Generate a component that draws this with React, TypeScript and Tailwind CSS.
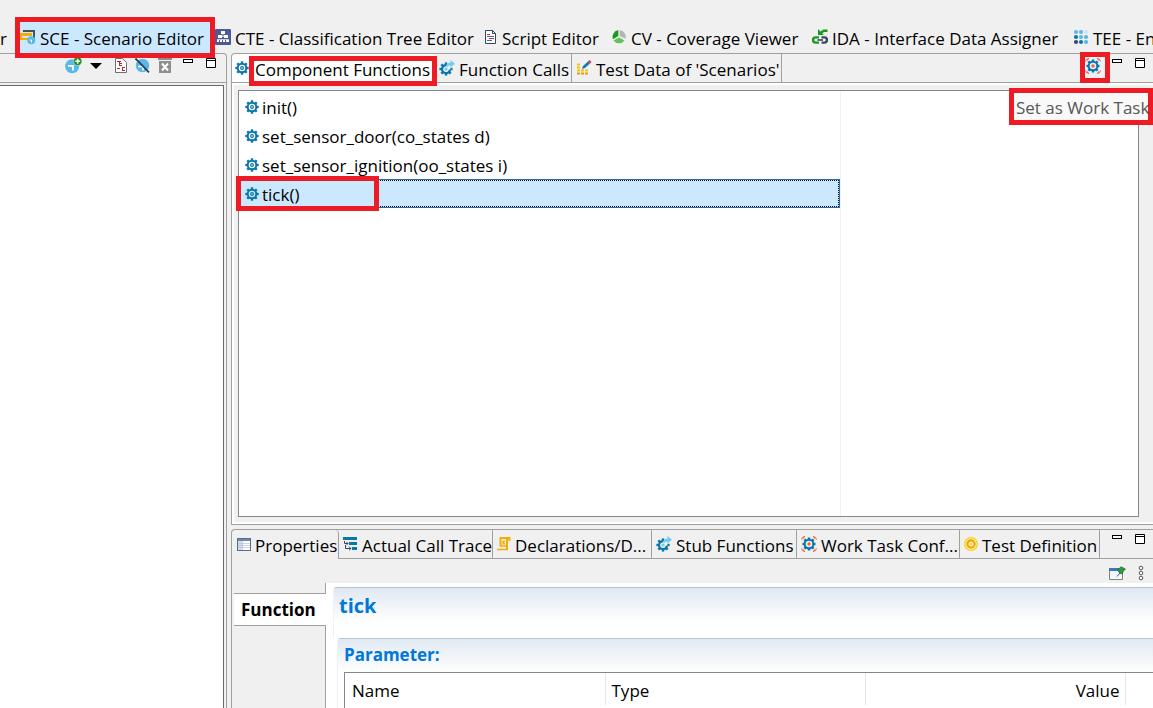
import type { ReactNode } from "react";

interface IconProps {
	className?: string;
}

interface TabItem {
	label: string;
	icon: ReactNode;
	width: string;
	marked?: boolean;
}

const TEETH = [0, 45, 90, 135, 180, 225, 270, 315];

function GearIcon({ className = "size-[14px]" }: IconProps) {
	return (
		<svg viewBox="0 0 14 14" className={`${className} shrink-0`} fill="none" stroke="#0b76a8">
			<circle cx="7" cy="7" r="4.3" strokeWidth="2" />
			{TEETH.map((a) => (
				<path key={a} d="M7 0.3V2.6" strokeWidth="2.4" transform={`rotate(${a} 7 7)`} />
			))}
			<circle cx="7" cy="7" r="1.4" strokeWidth="1.2" />
		</svg>
	);
}

function GearArrowIcon() {
	return (
		<svg viewBox="0 0 16 16" className="size-4 shrink-0" fill="none" stroke="#0b76a8">
			<path d="M7.5 5.2A4 4 0 1 0 11 9.6" strokeWidth="2.2" />
			{[0, 90, 135, 180, 225, 270, 315].map((a) => (
				<path key={a} d="M7 2.4V4.6" strokeWidth="2.4" transform={`rotate(${a} 7 9)`} />
			))}
			<path d="M8 9C8 6.5 9 5.4 11.3 5.4V7.6L16 3.8L11.5 0V2.6C8.5 2.8 7 5 8 9Z" fill="#6fcdf5" stroke="none" />
			<circle cx="7" cy="9" r="1.6" fill="#6fcdf5" stroke="none" />
		</svg>
	);
}

function WorkTaskIcon() {
	return (
		<svg viewBox="0 0 16 16" className="size-4 shrink-0" fill="none" stroke="#0b76a8">
			<circle cx="8" cy="8" r="4.3" strokeWidth="2" />
			{TEETH.map((a) => (
				<path key={a} d="M8 1.5V3.5" strokeWidth="2.5" transform={`rotate(${a} 8 8)`} />
			))}
			<circle cx="8" cy="8" r="1.7" fill="#f4623a" stroke="none" />
			<path
				d="M0.5 3.5V2.5M2.5 0.8H4M15.5 3.5V2.5M12 0.8H13.5M0.5 12.5V13.5M2.5 15.2H4M15.5 12.5V13.5M12 15.2H13.5M1.3 1.3L2.6 2.6M14.7 1.3L13.4 2.6M1.3 14.7L2.6 13.4M14.7 14.7L13.4 13.4"
				stroke="#f4623a"
				strokeWidth="1.4"
			/>
		</svg>
	);
}

function ScenarioIcon() {
	return (
		<svg viewBox="0 0 16 16" className="size-4 shrink-0">
			<path d="M3 1H15V9H13V3H3Z" fill="#4a4f5c" />
			<path d="M0 4H12V7H2V9H8V11H0Z" fill="#f2ae00" />
			<circle cx="11.3" cy="11.2" r="4" fill="#58b8e6" />
			<path d="M9.5 11H11.5V13.5" fill="none" stroke="#fff" strokeWidth="1" />
		</svg>
	);
}

function TreeIcon() {
	return (
		<svg viewBox="0 0 16 16" className="size-4 shrink-0">
			<rect width="16" height="16" rx="1" fill="#4d5a94" />
			<path d="M6 2H10V5H6ZM3 6H7V9H3ZM9 6H13V9H9ZM2 11H4V13H2ZM5 11H7V13H5ZM8 11H10V13H8ZM11 11H14V13H11Z" fill="#fff" />
			<path d="M8 4V7.5M5 7.5H11M2 10.5H14" stroke="#fff" strokeWidth="0.7" />
		</svg>
	);
}

function ScriptIcon() {
	return (
		<svg viewBox="0 0 14 16" className="h-4 w-[14px] shrink-0" fill="none">
			<path d="M1.5 1.5H8.5L11.5 4.5V14.5H1.5Z" fill="#fff" stroke="#33475f" />
			<path d="M8.5 1.5V4.5H11.5" stroke="#33475f" />
			<path d="M3 5.5H6M5 9.5H10" stroke="#d22" />
			<path d="M3 7.5H10M3 11.5H8" stroke="#2f6f9f" />
		</svg>
	);
}

function CoverageIcon() {
	return (
		<svg viewBox="0 0 16 16" className="size-4 shrink-0">
			<path d="M7.3 1V7L2 10.2A7 7 0 0 1 7.3 1Z" fill="#149a1d" />
			<path d="M8.7 1A7 7 0 0 1 14.5 9.8L8.7 7Z" fill="#b5b5b5" />
			<path d="M8 8.4L13.6 11.4A7 7 0 0 1 2.4 11.4Z" fill="#62c25a" />
		</svg>
	);
}

function InterfaceIcon() {
	return (
		<svg viewBox="0 0 16 16" className="size-4 shrink-0" fill="none">
			<path d="M6 0V6H12L10.2 4.4L12 3H15.5V0.5H11.5L8.5 2.4Z" fill="#149a1d" />
			<path d="M7 8.4H3.6A2.6 2.6 0 0 0 3.6 13.6H7" stroke="#149a1d" strokeWidth="2.4" />
			<path d="M9.5 8.4H12.4A2.6 2.6 0 0 1 12.4 13.6H9.5" stroke="#3a4663" strokeWidth="2.4" />
			<path d="M5.5 11H11" stroke="#3a4663" strokeWidth="1.6" />
		</svg>
	);
}

function EnvironmentIcon() {
	const colors = ["#58b8e6", "#58b8e6", "#cfe3f1", "#0b76a8", "#58b8e6", "#58b8e6", "#3a4663", "#0b76a8", "#58b8e6"];
	return (
		<svg viewBox="0 0 16 16" className="size-4 shrink-0">
			{colors.map((c, i) => (
				<circle key={i} cx={3 + (i % 3) * 5} cy={3 + Math.floor(i / 3) * 5} r="2.1" fill={c} />
			))}
		</svg>
	);
}

function TestDataIcon() {
	return (
		<svg viewBox="0 0 15 16" className="h-4 w-[15px] shrink-0" fill="none">
			<path d="M0 4.5H4M0 7.5H4" stroke="#f5c400" strokeWidth="2" strokeDasharray="3 1" />
			<path d="M0 10.5H12" stroke="#f5c400" strokeWidth="2" strokeDasharray="3 1" />
			<path d="M0 13.5H12" stroke="#e09a1a" strokeWidth="2" strokeDasharray="3 1" />
			<path d="M5 9L6 6L11 1.5L13 3.5L8 8Z" fill="#1878b0" />
			<path d="M11 1.5L12.5 0L14.5 2L13 3.5Z" fill="#d9343a" />
		</svg>
	);
}

function PropertiesIcon() {
	return (
		<svg viewBox="0 0 14 14" className="size-[14px] shrink-0">
			<rect x="0.5" y="0.5" width="13" height="12" fill="#fff" stroke="#5d6c86" />
			<path d="M1 1H13V3H1Z" fill="#7287a8" />
			<path d="M1 3H5V12H1Z" fill="#d5dde9" />
			<path d="M5.5 3V12M1 5.5H13M1 7.5H13M1 9.5H13" stroke="#b8c2d2" strokeWidth="0.7" />
		</svg>
	);
}

function TraceIcon() {
	return (
		<svg viewBox="0 0 15 14" className="h-[14px] w-[15px] shrink-0" fill="none">
			<path d="M0 0H14V3H0ZM6 5H14V8H6ZM9 10H14V13H9Z" fill="#0b76a8" />
			<path d="M1.5 4V6.5H5M3.5 5L5 6.5L3.5 8M2.5 8V11.5H8M6 9.5L8 11.5L6 13.3" stroke="#3a4a5c" />
		</svg>
	);
}

function ScrollIcon() {
	return (
		<svg viewBox="0 0 14 14" className="size-[14px] shrink-0" fill="none" stroke="#f2ae00">
			<path d="M3.5 1H12.5V4M3.5 0V9.5M10 1V12" strokeWidth="2" />
			<path d="M0 12.5H11M3.5 9H10M8 4.2H6.2V6.6H8" strokeWidth="1.6" />
		</svg>
	);
}

function TargetIcon() {
	return (
		<svg viewBox="0 0 14 14" className="size-[14px] shrink-0" fill="none">
			<circle cx="7" cy="7" r="6.3" fill="#fff4b0" stroke="#f5cf20" strokeWidth="1.3" />
			<circle cx="7" cy="7" r="3.6" stroke="#f0a30a" strokeWidth="2.2" />
			<circle cx="7" cy="7" r="1" fill="#f5cf20" />
		</svg>
	);
}

function MinimizeIcon() {
	return (
		<svg viewBox="0 0 11 12" className="h-3 w-[11px]" fill="none">
			<rect x="0.5" y="2.5" width="9" height="3" fill="#fff" stroke="#000" />
		</svg>
	);
}

function MaximizeIcon() {
	return (
		<svg viewBox="0 0 11 12" className="h-3 w-[11px]" fill="none">
			<path d="M0.5 1.5H9.5V10.5H0.5ZM0.5 3.5H9.5" fill="#fff" stroke="#000" />
		</svg>
	);
}

function AddIcon() {
	return (
		<svg viewBox="0 0 17 17" className="size-[17px]">
			<circle cx="7.2" cy="9.2" r="7" fill="#58b8e6" />
			<path d="M3 8.8H8V13.5" fill="none" stroke="#fff" strokeWidth="1.8" />
			<circle cx="12.7" cy="4.3" r="4.2" fill="#128a1c" stroke="#dff0d8" strokeWidth="0.6" />
			<path d="M12.7 1.8V6.8M10.2 4.3H15.2" stroke="#fff" strokeWidth="1.6" />
		</svg>
	);
}

function ReportIcon() {
	return (
		<svg viewBox="0 0 12 15" className="h-[15px] w-3" fill="none">
			<path d="M0.5 0.5H7.5L11.5 4.5V14.5H0.5Z" fill="#fff" stroke="#6b6f78" />
			<path d="M2 3.5H6M4 5.5H7M4 7.5H7M2 10.5H5M7 9.5H10M7 12.5H10M4.5 3V8M7.5 9V13" stroke="#c9202c" />
		</svg>
	);
}

function DisableIcon() {
	return (
		<svg viewBox="0 0 15 15" className="size-[15px]" fill="none">
			<circle cx="7.5" cy="7.5" r="6.8" fill="#58b8e6" />
			<path d="M3 8.5H8V12.5" stroke="#fff" strokeWidth="1.6" />
			<path d="M0.5 0.5L14 14.3" stroke="#2e3c5c" strokeWidth="1.8" />
		</svg>
	);
}

function DeleteIcon() {
	return (
		<svg viewBox="0 0 14 15" className="h-[15px] w-[14px]" fill="none">
			<path d="M0 0H14V2H0ZM1 3H13V15H1Z" fill="#8f8f8f" />
			<path d="M4 5.5L10 12.5M10 5.5L4 12.5" stroke="#fff" strokeWidth="2" />
		</svg>
	);
}

function PinIcon() {
	return (
		<svg viewBox="0 0 17 15" className="h-[15px] w-[17px]" fill="none">
			<path d="M0.5 2.5H13.5V13.5H0.5Z" fill="#f0f8ff" stroke="#8b8465" />
			<path d="M0 2H10V5H0Z" fill="#3f78b8" />
			<path d="M8 10.5L11 7" stroke="#555" />
			<path d="M8.5 4L12 0.8L16.5 3L14.5 5L13 8L10.5 7Z" fill="#2f9a3b" stroke="#1c6f2c" strokeWidth="0.7" />
		</svg>
	);
}

function MenuDotsIcon() {
	return (
		<svg viewBox="0 0 6 16" className="h-4 w-[6px]" fill="#fff" stroke="#555">
			<circle cx="3" cy="3" r="1.8" />
			<circle cx="3" cy="8" r="1.8" />
			<circle cx="3" cy="13" r="1.8" />
		</svg>
	);
}

/** Red callout around the nearest positioned parent. */
function Highlight({ className }: { className: string }) {
	return <span className={`pointer-events-none absolute z-10 border-5 border-[#ed1c24] ${className}`} />;
}

function ToolButton({ label, children }: { label: string; children: ReactNode }) {
	return (
		<button type="button" aria-label={label} className="flex shrink-0 items-center">
			{children}
		</button>
	);
}

function WindowButtons() {
	return (
		<div className="flex items-start gap-3 pt-[3px]">
			<ToolButton label="Minimize">
				<MinimizeIcon />
			</ToolButton>
			<ToolButton label="Maximize">
				<MaximizeIcon />
			</ToolButton>
		</div>
	);
}

const perspectives: TabItem[] = [
	{ label: "SCE - Scenario Editor", icon: <ScenarioIcon />, width: "w-[195px]", marked: true },
	{ label: "CTE - Classification Tree Editor", icon: <TreeIcon />, width: "w-[269px]" },
	{ label: "Script Editor", icon: <ScriptIcon />, width: "w-[127px]" },
	{ label: "CV - Coverage Viewer", icon: <CoverageIcon />, width: "w-[201px]" },
	{ label: "IDA - Interface Data Assigner", icon: <InterfaceIcon />, width: "w-[261px]" },
	{ label: "TEE - Environment Editor", icon: <EnvironmentIcon />, width: "w-[240px]" },
];

const functions = ["init()", "set_sensor_door(co_states d)", "set_sensor_ignition(oo_states i)", "tick()"];
const selectedFunction = "tick()";

const detailTabs: TabItem[] = [
	{ label: "Properties", icon: <PropertiesIcon />, width: "w-[107px]" },
	{ label: "Actual Call Trace", icon: <TraceIcon />, width: "w-[154px]" },
	{ label: "Declarations/D...", icon: <ScrollIcon />, width: "w-[159px]" },
	{ label: "Stub Functions", icon: <GearArrowIcon />, width: "w-[145px]" },
	{ label: "Work Task Conf...", icon: <WorkTaskIcon />, width: "w-[163px]" },
	{ label: "Test Definition", icon: <TargetIcon />, width: "w-[140px]" },
];

function PerspectiveBar() {
	return (
		<nav className="flex h-[53px] shrink-0 items-end whitespace-nowrap">
			<button type="button" className="flex h-8 w-[18px] shrink-0 items-center pt-1">
				r
			</button>
			{perspectives.map((p) => (
				<button
					key={p.label}
					type="button"
					className={`relative flex h-8 shrink-0 items-center gap-1 pl-[2px] ${p.width} ${p.marked ? "bg-[#cce8ff]" : ""}`}
				>
					{p.icon}
					<span className="pt-1">{p.label}</span>
					{p.marked && <Highlight className="-top-1 -right-[2px] -bottom-[5px] -left-[3px]" />}
				</button>
			))}
		</nav>
	);
}

function ScenarioPanel() {
	return (
		<aside className="flex w-[227px] shrink-0 flex-col rounded-tr border-t border-r border-[#a0a0a0]">
			<div className="flex h-[29px] shrink-0 items-start justify-end border-b border-[#a0a0a0] pr-[9px]">
				<div className="flex items-center gap-2 pt-[3px] pr-[11px]">
					<ToolButton label="Add scenario">
						<AddIcon />
					</ToolButton>
					<ToolButton label="More">
						<svg viewBox="0 0 12 6" className="mr-[5px] h-[6px] w-3">
							<path d="M0 0H12L6 6Z" />
						</svg>
					</ToolButton>
					<ToolButton label="Report">
						<ReportIcon />
					</ToolButton>
					<ToolButton label="Disable">
						<DisableIcon />
					</ToolButton>
					<ToolButton label="Delete">
						<DeleteIcon />
					</ToolButton>
				</div>
				<WindowButtons />
			</div>
			<div className="mt-[2px] mr-[2px] flex-1 border-t border-r border-[#696969] bg-white" />
		</aside>
	);
}

function FunctionsPanel() {
	return (
		<section className="flex h-[472px] shrink-0 flex-col rounded-tl border-t border-b border-l border-[#a0a0a0]">
			<div className="flex h-[29px] shrink-0 justify-between border-b border-[#a0a0a0] whitespace-nowrap">
				<div className="flex">
					<button type="button" className="relative flex w-[203px] items-center gap-[6px] rounded-t bg-white pl-[3px]">
						<GearIcon />
						<span className="pt-[3px]">Component Functions</span>
						<Highlight className="top-[2px] -right-[2px] -bottom-[4px] left-[17px]" />
					</button>
					<button type="button" className="flex w-[137px] items-center gap-1 border-r border-[#a0a0a0] pl-1">
						<GearArrowIcon />
						<span className="pt-[3px]">Function Calls</span>
					</button>
					<button type="button" className="flex w-[210px] items-center gap-1 border-r border-[#a0a0a0] pl-[5px]">
						<TestDataIcon />
						<span className="pt-[3px]">Test Data of 'Scenarios'</span>
					</button>
				</div>
				<div className="relative flex items-start gap-[11px] pr-[7px]">
					<div className="relative mt-1">
						<button type="button" aria-label="Set as Work Task" className="flex bg-[#e5f3ff]">
							<WorkTaskIcon />
						</button>
						<Highlight className="-top-[6px] -right-[9px] -bottom-[9px] -left-[5px]" />
					</div>
					<WindowButtons />
					<div
						role="tooltip"
						className="absolute top-[34px] right-0 z-20 flex h-[37px] w-36 items-center border-5 border-[#ed1c24] bg-[#f9f9f9] pt-[2px] pl-[2px] text-[#575757]"
					>
						Set as Work Task
					</div>
				</div>
			</div>
			<div className="flex min-h-0 flex-1 border-y-2 border-l-2 border-white pt-[5px] pr-[14px] pb-[5px] pl-1">
				<div className="flex-1 border border-[#828790] bg-white">
					<ul className="h-full w-[67%] border-r border-[#eaf3fb] pt-px">
						{functions.map((name) => (
							<li key={name} className="h-[29px]">
								<button
									type="button"
									className={`relative flex h-full w-full items-center border text-left ${
										name === selectedFunction ? "border-[#1f6fb5] bg-[#cce8ff]" : "border-transparent"
									}`}
								>
									<span
										className={`flex h-full w-full items-center gap-[3px] border border-dotted pl-1 ${
											name === selectedFunction ? "border-black" : "border-transparent"
										}`}
									>
										<GearIcon />
										<span className="pt-[2px]">{name}</span>
									</span>
									{name === selectedFunction && <Highlight className="-top-1 -bottom-1 -left-1 w-[143px]" />}
								</button>
							</li>
						))}
					</ul>
				</div>
			</div>
		</section>
	);
}

function DetailsPanel() {
	return (
		<section className="mt-1 flex min-h-0 flex-1 flex-col rounded-tl border-t border-l border-[#a0a0a0]">
			<div className="flex h-[29px] shrink-0 justify-between whitespace-nowrap">
				{detailTabs.map((tab, i) => (
					<button
						key={tab.label}
						type="button"
						className={`flex shrink-0 items-center gap-1 border-r border-[#a0a0a0] ${tab.width} ${
							i > 0 ? "border-b pl-1" : "rounded-tr pl-[5px]"
						}`}
					>
						{tab.icon}
						<span className="pt-[3px]">{tab.label}</span>
					</button>
				))}
				<div className="flex flex-1 justify-end border-b border-[#a0a0a0] pr-[7px]">
					<WindowButtons />
				</div>
			</div>
			<div className="flex h-6 shrink-0 items-center justify-end gap-3 pt-1 pr-[9px]">
				<ToolButton label="Pin to selection">
					<PinIcon />
				</ToolButton>
				<ToolButton label="View menu">
					<MenuDotsIcon />
				</ToolButton>
			</div>
			<div className="flex min-h-0 flex-1 pl-[2px]">
				<div className="flex w-[92px] shrink-0 flex-col">
					<div className="h-[10px] border-r border-[#a0a0a0]" />
					<button type="button" className="h-[33px] border-y border-[#a0a0a0] bg-white pl-[7px] text-left font-bold">
						Function
					</button>
					<div className="flex-1 border-r border-[#a0a0a0]" />
				</div>
				<div className="flex min-w-0 flex-1 flex-col overflow-hidden bg-white pt-1 pl-[7px]">
					<h1 className="h-[51px] shrink-0 rounded-tl border-t border-l border-t-[#b4c6da] border-l-[#eef2f8] bg-linear-to-b from-[#e1e8f2] to-white to-70% pl-[5px] text-xl leading-9 font-bold text-[#0078d7]">
						tick
					</h1>
					<div className="ml-1 flex flex-1 flex-col rounded-tl border-t border-l border-t-[#b4c6da] border-l-[#eef2f8]">
						<h2 className="h-[33px] shrink-0 bg-linear-to-b from-[#e0e9f2] to-white pl-[6px] leading-8 font-bold text-[#0078d7]">
							Parameter:
						</h2>
						<div className="ml-[6px] flex-1 border-t border-l border-[#828790]">
							<table className="w-full table-fixed">
								<thead>
									<tr className="h-8 text-left">
										<th className="w-[260px] border-r border-[#e5e5e5] pt-1 pl-[7px] font-normal">Name</th>
										<th className="w-[260px] border-r border-[#e5e5e5] pt-1 pl-[6px] font-normal">Type</th>
										<th className="border-r border-[#e5e5e5] pt-1 pr-[5px] text-right font-normal">Value</th>
										<th aria-label="Spacer" className="w-7" />
									</tr>
								</thead>
							</table>
						</div>
					</div>
				</div>
			</div>
		</section>
	);
}

export default function App() {
	return (
		<div className="flex h-screen flex-col overflow-hidden bg-[#f0f0f0] font-['Open_Sans','Noto_Sans',sans-serif] text-[17px] leading-6 text-black">
			<PerspectiveBar />
			<div className="flex min-h-0 flex-1 gap-1">
				<ScenarioPanel />
				<main className="flex min-w-0 flex-1 flex-col">
					<FunctionsPanel />
					<DetailsPanel />
				</main>
			</div>
		</div>
	);
}
